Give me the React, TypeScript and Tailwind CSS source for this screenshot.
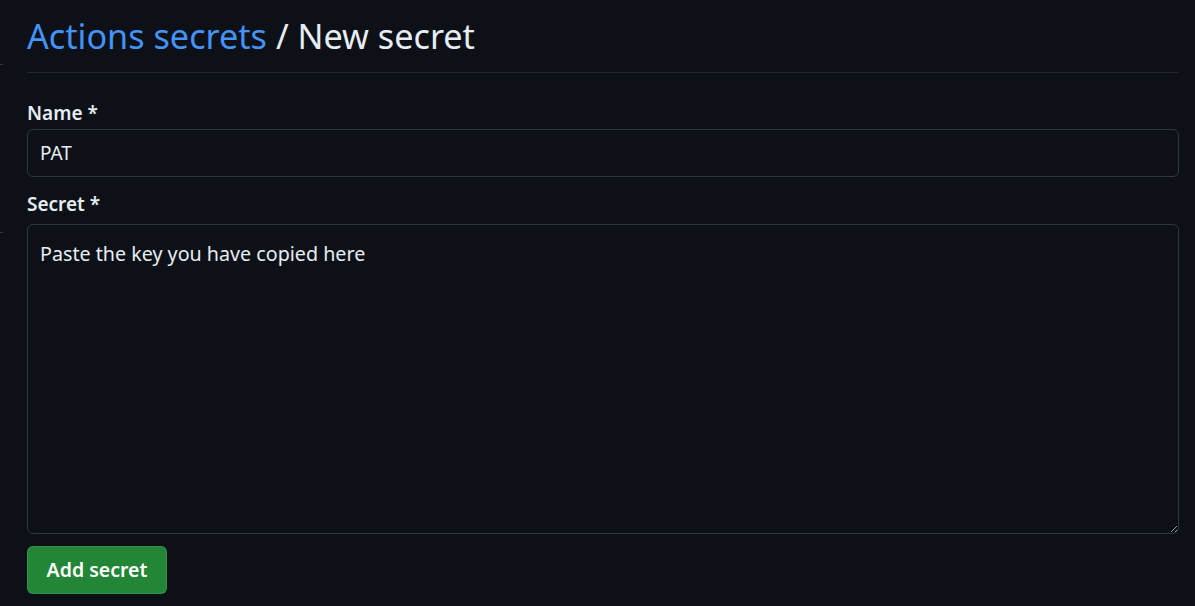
import React, {useState} from 'react';

const App = () => {
    const [name, setName] = useState('PAT');
    const [secret, setSecret] = useState('Paste the key you have copied here');

    return (
        <div className="relative min-h-[606px] w-full bg-[#0d1117] text-[#e6edf3] font-['Noto_Sans','Open_Sans',sans-serif]">
            {/* edges of the collapsed sidebar */}
            <div className="absolute left-0 top-[64px] h-px w-[3px] bg-[#30363d]" />
            <div className="absolute left-0 top-[232px] h-px w-[3px] bg-[#30363d]" />

            <div className="px-[27px] pr-[16px] pt-[12px]">
                <div className="flex items-center border-b border-[#21262d] pb-[12px]">
                    <h2 className="text-[34.2px] leading-[48px] font-normal">
                        <a href="#" className="text-[#4493f8]">Actions secrets</a>
                        <span> / New secret</span>
                    </h2>
                </div>

                <form className="flex flex-col pt-[28px]" onSubmit={(event) => event.preventDefault()}>
                    <label htmlFor="secret-name" className="mb-[4px] text-[19px] font-semibold leading-[24px]">
                        Name *
                    </label>
                    <input
                        id="secret-name"
                        value={name}
                        onChange={(event) => setName(event.target.value)}
                        className="h-[48px] w-full rounded-[6px] border border-[#30363d] bg-[#0d1117] px-[12px] text-[19px] text-[#e6edf3] outline-none"
                    />

                    <label htmlFor="secret-value" className="mt-[15px] mb-[8px] text-[19px] font-semibold leading-[24px]">
                        Secret *
                    </label>
                    <textarea
                        id="secret-value"
                        value={secret}
                        onChange={(event) => setSecret(event.target.value)}
                        className="h-[310px] w-full rounded-[6px] border border-[#30363d] bg-[#0d1117] px-[12px] py-[16px] text-[19.7px] leading-[26px] text-[#e6edf3] outline-none"
                    />

                    <div className="mt-[12px]">
                        <button
                            type="submit"
                            className="h-[48px] w-[140px] rounded-[6px] border border-[#f0f6fc1a] bg-[#238636] text-[19.5px] font-semibold text-white"
                        >
                            Add secret
                        </button>
                    </div>
                </form>
            </div>
        </div>
    );
};

export default App;
